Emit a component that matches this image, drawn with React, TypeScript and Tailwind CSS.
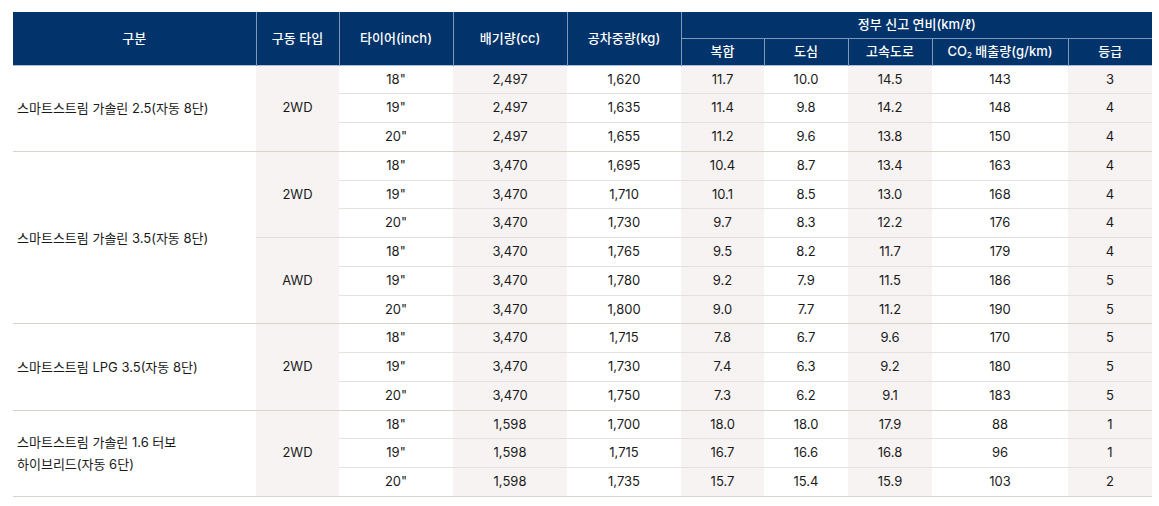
const groups = [
  {
    name: ['스마트스트림 가솔린 2.5(자동 8단)'],
    drives: [
      {
        type: '2WD',
        rows: [
          ['18"', '2,497', '1,620', '11.7', '10.0', '14.5', '143', '3'],
          ['19"', '2,497', '1,635', '11.4', '9.8', '14.2', '148', '4'],
          ['20"', '2,497', '1,655', '11.2', '9.6', '13.8', '150', '4'],
        ],
      },
    ],
  },
  {
    name: ['스마트스트림 가솔린 3.5(자동 8단)'],
    drives: [
      {
        type: '2WD',
        rows: [
          ['18"', '3,470', '1,695', '10.4', '8.7', '13.4', '163', '4'],
          ['19"', '3,470', '1,710', '10.1', '8.5', '13.0', '168', '4'],
          ['20"', '3,470', '1,730', '9.7', '8.3', '12.2', '176', '4'],
        ],
      },
      {
        type: 'AWD',
        rows: [
          ['18"', '3,470', '1,765', '9.5', '8.2', '11.7', '179', '4'],
          ['19"', '3,470', '1,780', '9.2', '7.9', '11.5', '186', '5'],
          ['20"', '3,470', '1,800', '9.0', '7.7', '11.2', '190', '5'],
        ],
      },
    ],
  },
  {
    name: ['스마트스트림 LPG 3.5(자동 8단)'],
    drives: [
      {
        type: '2WD',
        rows: [
          ['18"', '3,470', '1,715', '7.8', '6.7', '9.6', '170', '5'],
          ['19"', '3,470', '1,730', '7.4', '6.3', '9.2', '180', '5'],
          ['20"', '3,470', '1,750', '7.3', '6.2', '9.1', '183', '5'],
        ],
      },
    ],
  },
  {
    name: ['스마트스트림 가솔린 1.6 터보', '하이브리드(자동 6단)'],
    drives: [
      {
        type: '2WD',
        rows: [
          ['18"', '1,598', '1,700', '18.0', '18.0', '17.9', '88', '1'],
          ['19"', '1,598', '1,715', '16.7', '16.6', '16.8', '96', '1'],
          ['20"', '1,598', '1,735', '15.7', '15.4', '15.9', '103', '2'],
        ],
      },
    ],
  },
];

// shaded columns among the data cells (tire, cc, kg, 복합, 도심, 고속, co2, 등급)
const shaded = [false, true, false, true, false, true, false, true];

const App = () => {
  return (
    <div
      className="w-[1159px] h-[506px] bg-white pt-3 pl-[13px] text-[#1a1a1a]"
      style={{ fontFamily: 'Inter, "Noto Sans CJK KR", sans-serif' }}
    >
      <table className="w-[1139px] table-fixed border-collapse text-[13px]">
        <colgroup>
          <col className="w-[243px]" />
          <col className="w-[83px]" />
          <col className="w-[114px]" />
          <col className="w-[114px]" />
          <col className="w-[114px]" />
          <col className="w-[83px]" />
          <col className="w-[84px]" />
          <col className="w-[84px]" />
          <col className="w-[136px]" />
          <col className="w-[84px]" />
        </colgroup>
        <thead className="bg-[#02336a] text-white font-medium">
          <tr className="h-[26px]">
            <th rowSpan={2} className="font-medium border-r border-[#7f98b8]">구분</th>
            <th rowSpan={2} className="font-medium border-r border-[#7f98b8]">구동 타입</th>
            <th rowSpan={2} className="font-medium border-r border-[#7f98b8]">타이어(inch)</th>
            <th rowSpan={2} className="font-medium border-r border-[#7f98b8]">배기량(cc)</th>
            <th rowSpan={2} className="font-medium border-r border-[#7f98b8]">공차중량(kg)</th>
            <th colSpan={5} className="font-medium border-b border-[#7f98b8]">
              정부 신고 연비(km/ℓ)
            </th>
          </tr>
          <tr className="h-[27px]">
            <th className="font-medium border-r border-[#7f98b8]">복합</th>
            <th className="font-medium border-r border-[#7f98b8]">도심</th>
            <th className="font-medium border-r border-[#7f98b8]">고속도로</th>
            <th className="font-medium border-r border-[#7f98b8]">
              CO<sub className="text-[8px]">2</sub> 배출량(g/km)
            </th>
            <th className="font-medium">등급</th>
          </tr>
        </thead>
        <tbody className="border-t border-[#a8bedb]">
          {groups.map((g, gi) => {
            const total = g.drives.reduce((n, d) => n + d.rows.length, 0);
            return g.drives.map((d, di) =>
              d.rows.map((r, ri) => {
                const lastInDrive = ri === d.rows.length - 1;
                const lastInGroup = lastInDrive && di === g.drives.length - 1;
                return (
                  <tr
                    key={`${gi}-${di}-${ri}`}
                    className={`h-[28.75px] ${
                      lastInGroup
                        ? 'border-b border-[#d9d3cd]'
                        : lastInDrive
                          ? 'border-b border-[#e2ddd8]'
                          : ''
                    }`}
                  >
                    {di === 0 && ri === 0 && (
                      <td
                        rowSpan={total}
                        className="pl-1 text-left leading-[22px] border-b border-[#d9d3cd]"
                      >
                        {g.name.map((line) => (
                          <div key={line}>{line}</div>
                        ))}
                      </td>
                    )}
                    {ri === 0 && (
                      <td rowSpan={d.rows.length} className="text-center bg-[#f6f3f2]">
                        {d.type}
                      </td>
                    )}
                    {r.map((v, ci) => (
                      <td
                        key={ci}
                        className={`p-0 text-center ${shaded[ci] ? 'bg-[#f6f3f2]' : ''} ${
                          lastInDrive ? '' : 'border-b border-[#e5e0dc]'
                        }`}
                      >
                        {v}
                      </td>
                    ))}
                  </tr>
                );
              }),
            );
          })}
        </tbody>
      </table>
    </div>
  );
};

export default App;
